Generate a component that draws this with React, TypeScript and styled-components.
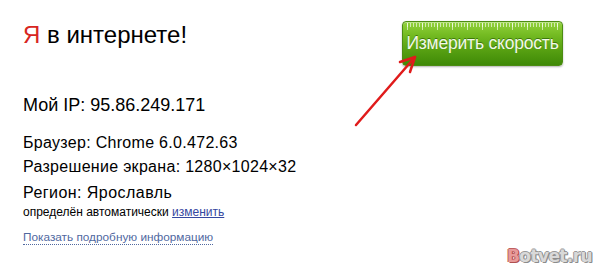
import React from "react";
import styled, { createGlobalStyle } from "styled-components";

const GlobalStyle = createGlobalStyle`
  html, body {
    margin: 0;
    padding: 0;
    background: #fff;
  }
  body {
    font-family: "Liberation Sans", Arial, sans-serif;
    color: #000;
  }
`;

const Page = styled.div`
  position: relative;
  width: 600px;
  height: 273px;
  box-sizing: border-box;
  padding: 21px 37px 0 23px;
  overflow: hidden;
`;

const Top = styled.div`
  display: flex;
  justify-content: space-between;
  align-items: flex-start;
`;

const Title = styled.h1`
  margin: 0;
  font-size: 24px;
  line-height: 28px;
  font-weight: normal;
`;

const Red = styled.span`
  color: #d8261f;
`;

const MeasureButton = styled.button`
  position: relative;
  width: 161px;
  height: 45px;
  padding: 0;
  border: 1px solid #4c8c12;
  border-radius: 4px;
  background:
    repeating-linear-gradient(90deg, rgba(255, 255, 255, 0.6) 0 1px, transparent 1px 3px) top 1px left 4px / calc(100% - 8px) 4px no-repeat,
    repeating-linear-gradient(90deg, rgba(255, 255, 255, 0.6) 0 1px, transparent 1px 15px) top 1px left 4px / calc(100% - 8px) 7px no-repeat,
    linear-gradient(#93d23d 0%, #74bb22 30%, #5ea715 55%, #3f8a07 100%);
  box-shadow: 0 1px 2px rgba(0, 0, 0, 0.3), inset 0 1px 0 rgba(255, 255, 255, 0.4);
  color: #f2f9e8;
  font-family: "Liberation Sans", Arial, sans-serif;
  font-size: 17.5px;
  letter-spacing: -0.2px;
  text-shadow: 0 -1px 0 rgba(30, 80, 0, 0.6);
  cursor: pointer;
`;

const Info = styled.div`
  margin-top: 29px;
`;

const IpLine = styled.div`
  font-size: 18px;
  line-height: 20px;
  margin-bottom: 16px;
`;

const Line = styled.div<{ $gap?: number; $spacing?: number }>`
  font-size: 16px;
  letter-spacing: ${(p) => p.$spacing ?? 0.3}px;
  line-height: 24px;
  margin-top: ${(p) => p.$gap ?? 0}px;
`;

const Note = styled.div`
  font-size: 12px;
  line-height: 14px;
`;

const ChangeLink = styled.a`
  color: #3548a0;
  text-decoration: underline;
`;

const MoreLink = styled.a`
  display: inline-block;
  margin-top: 11px;
  font-size: 11.8px;
  line-height: 14px;
  color: #50689f;
  text-decoration: none;
  border-bottom: 1px dotted #50689f;
`;

const ArrowSvg = styled.svg`
  position: absolute;
  left: 350px;
  top: 50px;
`;

const Watermark = styled.div`
  position: absolute;
  right: 8px;
  bottom: 7px;
  font-family: "DejaVu Sans", "Liberation Sans", sans-serif;
  font-size: 17px;
  font-weight: bold;
  letter-spacing: -0.6px;
  color: #d9d9d9;
  text-shadow: 1px 1px 0 #8c8c8c, -1px 0 0 #9a9a9a, 0 -1px 0 #9a9a9a, 1px 0 0 #8c8c8c;
`;

const WatermarkB = styled.span`
  color: #e79a9a;
  text-shadow: 1px 1px 0 #b05050, -1px 0 0 #c06060, 0 -1px 0 #c06060, 1px 0 0 #b05050;
`;

export default function App() {
  return (
    <>
      <GlobalStyle />
      <Page>
        <Top>
          <Title>
            <Red>Я</Red> в интернете!
          </Title>
          <MeasureButton>Измерить скорость</MeasureButton>
        </Top>
        <Info>
          <IpLine>Мой IP: 95.86.249.171</IpLine>
          <Line>Браузер: Chrome 6.0.472.63</Line>
          <Line>Разрешение экрана: 1280×1024×32</Line>
          <Line $gap={2} $spacing={0.45}>Регион: Ярославль</Line>
          <Note>
            определён автоматически <ChangeLink href="#">изменить</ChangeLink>
          </Note>
          <MoreLink href="#">Показать подробную информацию</MoreLink>
        </Info>
        <ArrowSvg width="80" height="85" viewBox="0 0 80 85">
          <g stroke="#e01b1b" strokeWidth="2.5" strokeLinecap="round" fill="none">
            <line x1="6" y1="75" x2="65" y2="7" />
            <polyline points="50,12 65,7 60,22" strokeLinejoin="round" />
          </g>
        </ArrowSvg>
        <Watermark>
          <WatermarkB>B</WatermarkB>otvet.ru
        </Watermark>
      </Page>
    </>
  );
}
